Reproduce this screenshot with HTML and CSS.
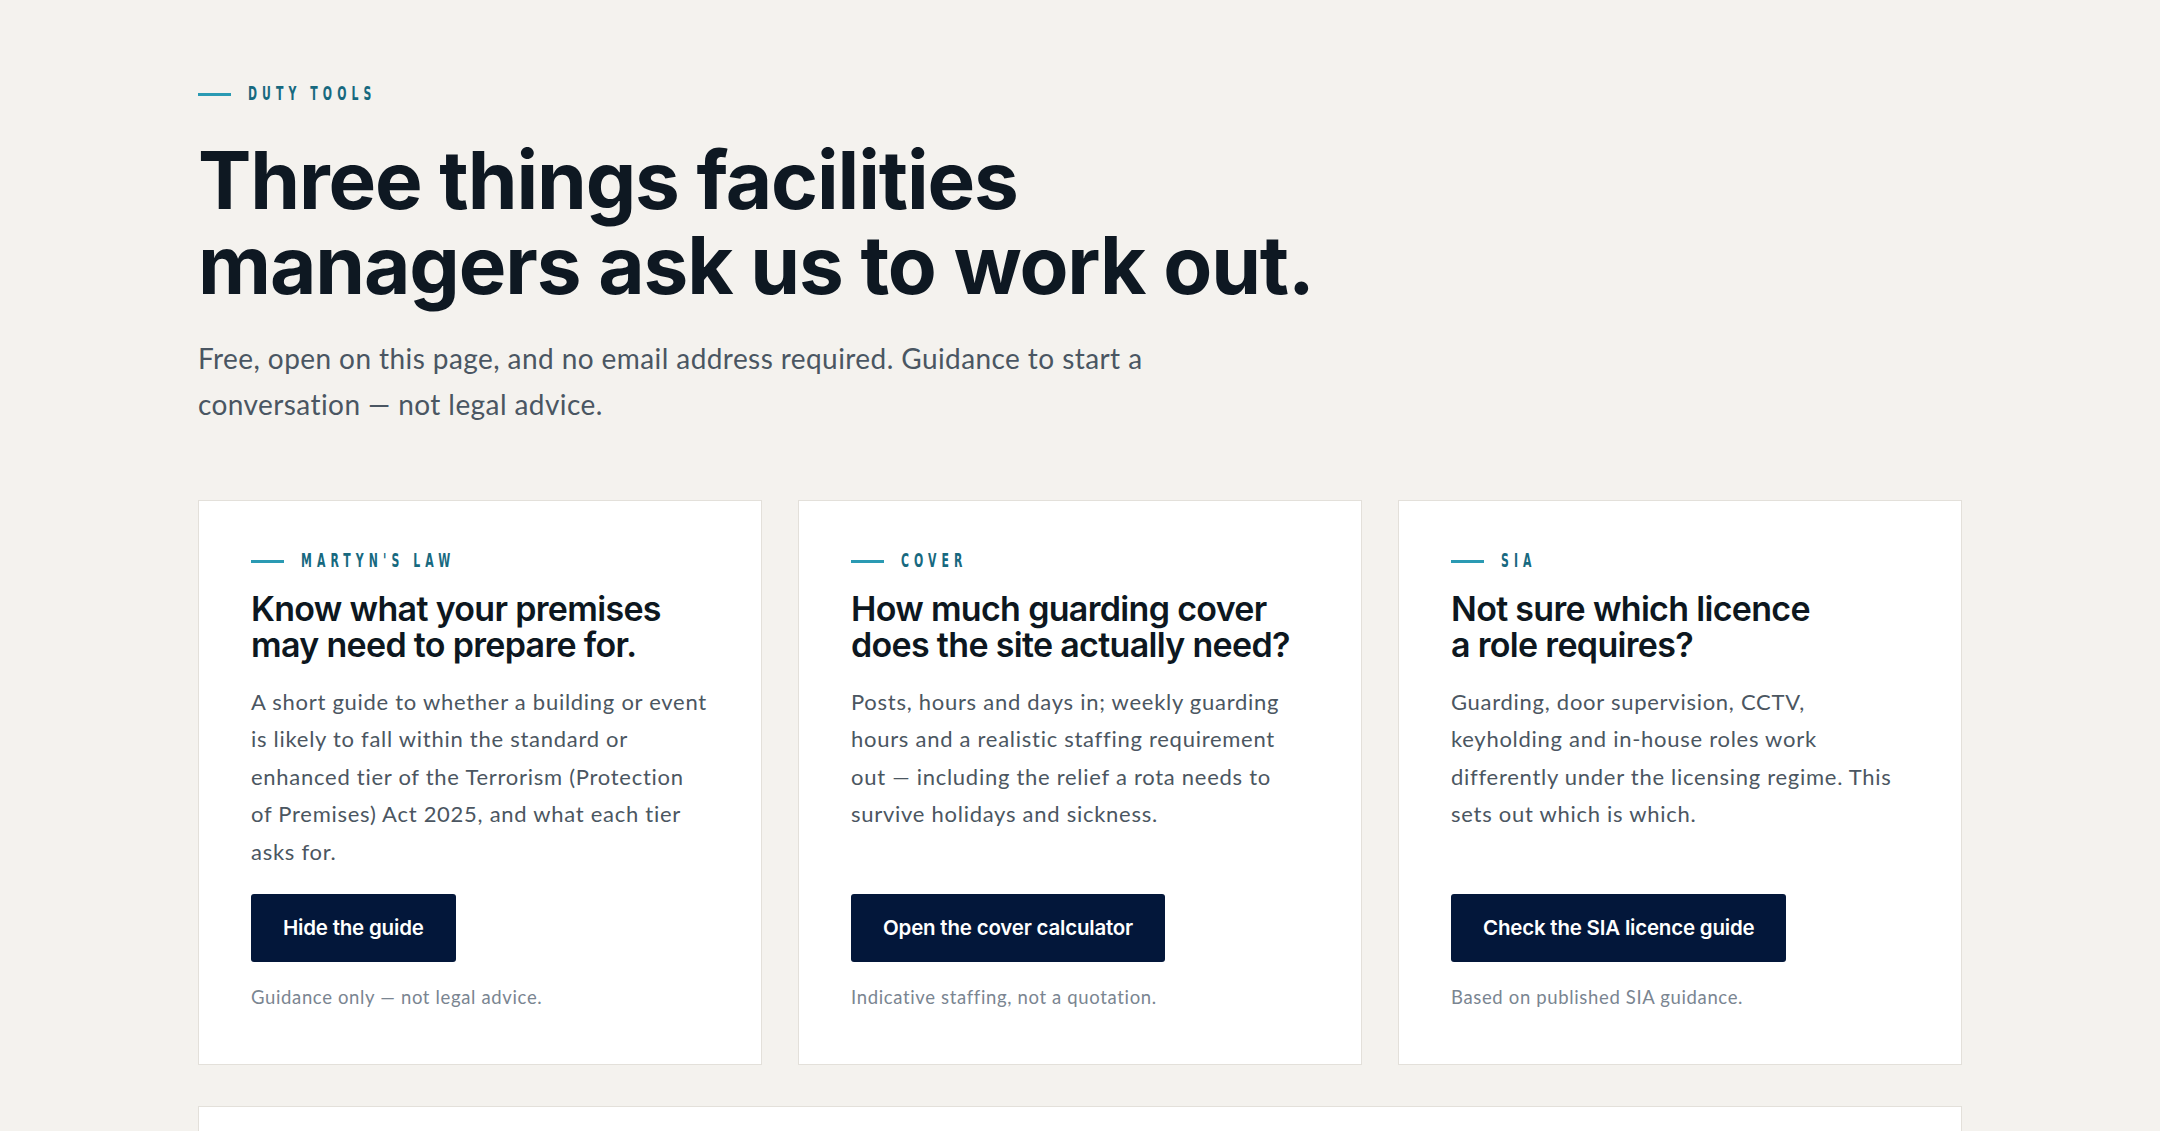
FILE: index.html
```html
<!DOCTYPE html>
<html lang="en-GB">
<head>
    <meta charset="UTF-8">
    <meta name="viewport" content="width=device-width, initial-scale=1.0">
    <title>Duty tools</title>
    <link rel="stylesheet" href="styles.css">
</head>
<body>
    <section class="tools">
        <div class="eyebrow"><span class="eyebrow-text">Duty tools</span></div>
        <h1>Three things facilities managers ask us to work out.</h1>
        <p class="lead">Free, open on this page, and no email address required. Guidance to start a conversation &mdash; not legal advice.</p>

        <div class="cards">
            <article class="card">
                <div class="eyebrow"><span class="eyebrow-text">Martyn's law</span></div>
                <h2>Know what your premises may need to prepare for.</h2>
                <p class="card-text">A short guide to whether a building or event is likely to fall within the standard or enhanced tier of the Terrorism (Protection of Premises) Act 2025, and what each tier asks for.</p>
                <button class="card-btn">Hide the guide</button>
                <p class="card-note">Guidance only &mdash; not legal advice.</p>
            </article>

            <article class="card">
                <div class="eyebrow"><span class="eyebrow-text">Cover</span></div>
                <h2>How much guarding cover does the site actually need?</h2>
                <p class="card-text">Posts, hours and days in; weekly guarding hours and a realistic staffing requirement out &mdash; including the relief a rota needs to survive holidays and sickness.</p>
                <button class="card-btn">Open the cover calculator</button>
                <p class="card-note">Indicative staffing, not a quotation.</p>
            </article>

            <article class="card">
                <div class="eyebrow"><span class="eyebrow-text">SIA</span></div>
                <h2>Not sure which licence a role requires?</h2>
                <p class="card-text">Guarding, door supervision, CCTV, keyholding and in-house roles work differently under the licensing regime. This sets out which is which.</p>
                <button class="card-btn">Check the SIA licence guide</button>
                <p class="card-note">Based on published SIA guidance.</p>
            </article>
        </div>

        <!-- guide panel opened by the first card -->
        <div class="guide"></div>
    </section>
</body>
</html>
```

FILE: styles.css
```css
* {
    margin: 0;
    padding: 0;
    box-sizing: border-box;
}

body {
    background: #f4f2ee;
    color: #0e1822;
    font-family: 'Lato', 'Noto Sans', sans-serif;
}

.tools {
    max-width: 1764px;
    margin: 0 auto;
    padding: 84px 0 80px;
}

/* small teal label with a rule in front */
.eyebrow {
    display: flex;
    align-items: center;
    gap: 17px;
    height: 20px;
    font-family: 'DejaVu Sans Condensed', 'DejaVu Sans', sans-serif;
    font-stretch: condensed;
    font-weight: bold;
    font-size: 19.5px;
    line-height: 20px;
    text-transform: uppercase;
    color: #17697f;
}

.eyebrow::before {
    content: '';
    width: 33px;
    height: 3px;
    background: #2a9ab3;
    flex-shrink: 0;
}

.eyebrow-text {
    display: inline-block;
    letter-spacing: 8.2px;
    transform: scaleX(0.62);
    transform-origin: left center;
    white-space: nowrap;
}

h1 {
    margin-top: 33px;
    max-width: 1140px;
    font-family: 'Inter', sans-serif;
    font-weight: 700;
    font-size: 80px;
    line-height: 85px;
    letter-spacing: -0.014em;
    color: #0e1822;
}

.lead {
    margin-top: 28px;
    max-width: 1000px;
    font-size: 28px;
    line-height: 46px;
    letter-spacing: 0.015em;
    color: #4a5662;
}

.cards {
    display: grid;
    grid-template-columns: repeat(3, 1fr);
    gap: 36px;
    margin-top: 73px;
}

.card {
    display: flex;
    flex-direction: column;
    align-items: flex-start;
    background: #fff;
    border: 1px solid #e3e0da;
    padding: 50px 52px 53px;
}

.card h2 {
    margin-top: 20px;
    font-family: 'Inter', sans-serif;
    font-weight: 600;
    font-size: 34px;
    line-height: 36px;
    letter-spacing: -0.02em;
    color: #0d1720;
    text-wrap: balance;
}

.card-text {
    margin-top: 20px;
    margin-bottom: 24px;
    flex: 1;
    font-size: 22px;
    line-height: 37.4px;
    letter-spacing: 0.033em;
    color: #4b5661;
}

.card-btn {
    background: #03173a;
    color: #fff;
    border: none;
    border-radius: 3px;
    padding: 22px 32px;
    font-family: 'Inter', sans-serif;
    font-weight: 600;
    font-size: 20.5px;
    line-height: 24px;
    letter-spacing: -0.01em;
    cursor: pointer;
}

.card-btn:hover {
    background: #0b2a5c;
}

.card-note {
    margin-top: 22px;
    font-size: 18.5px;
    line-height: 27px;
    letter-spacing: 0.035em;
    color: #7a8591;
}

.guide {
    margin-top: 41px;
    min-height: 320px;
    background: #fff;
    border: 1px solid #e3e0da;
}
```
